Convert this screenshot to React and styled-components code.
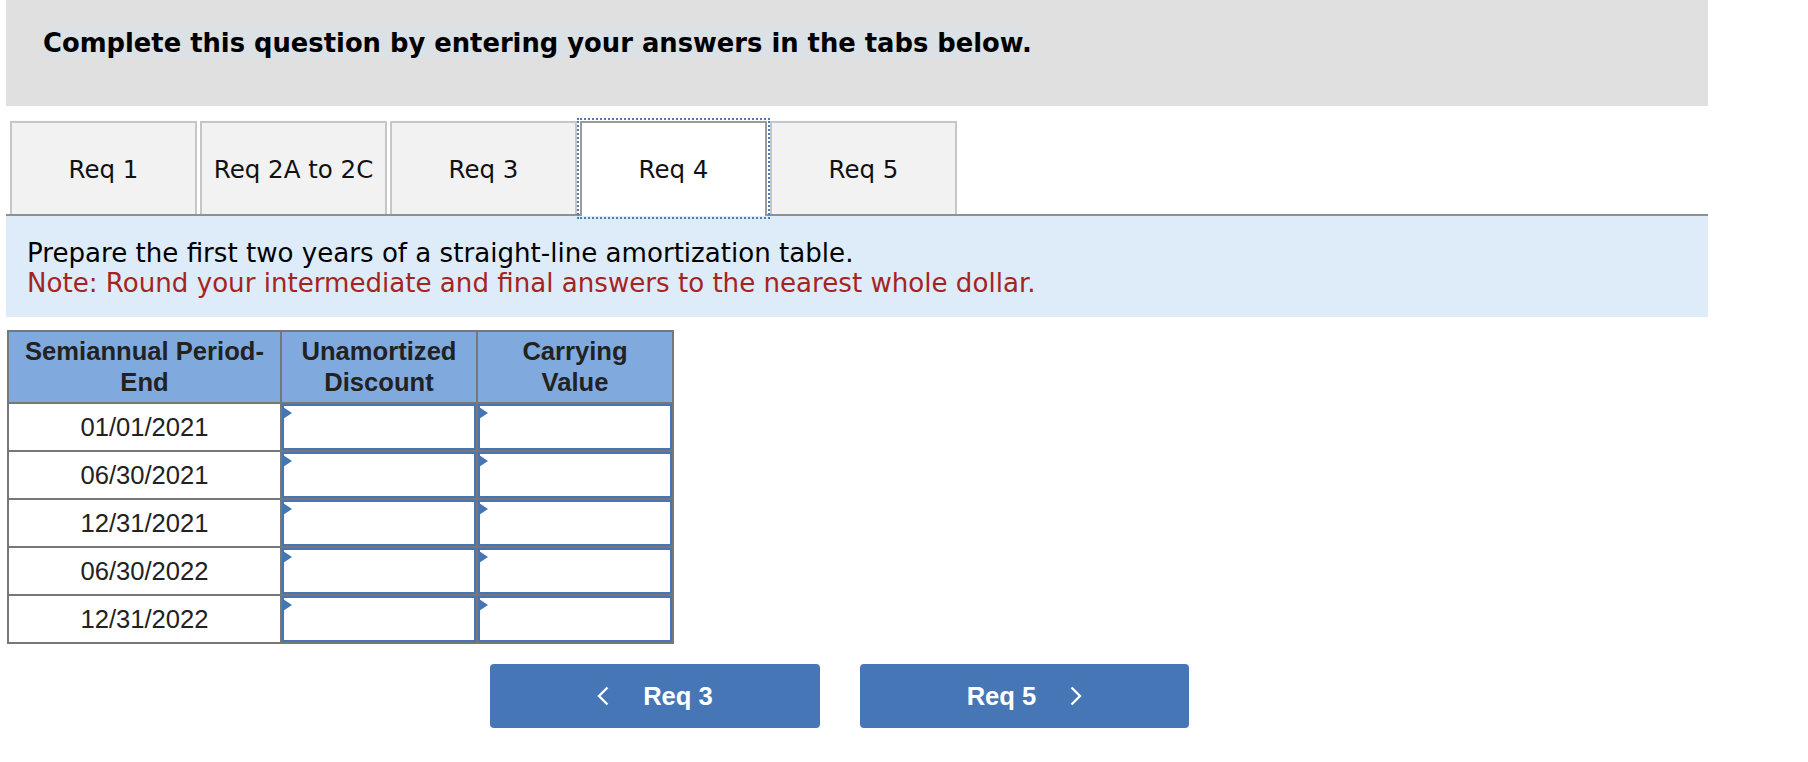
import React from 'react';
import styled, { createGlobalStyle, css } from 'styled-components';

const GlobalStyle = createGlobalStyle`
  html, body {
    margin: 0;
    padding: 0;
    background: #ffffff;
  }
  body {
    font-family: "DejaVu Sans", Verdana, sans-serif;
    color: #000;
  }
  * {
    box-sizing: border-box;
  }
`;

const Page = styled.div`
  width: 1808px;
  padding-left: 6px;
`;

const Column = styled.div`
  width: 1702px;
  display: flex;
  flex-direction: column;
  align-items: stretch;
`;

const Banner = styled.div`
  height: 106px;
  background: #e0e0e0;
  padding: 28px 0 0 37px;
  font-family: "DejaVu Sans", Verdana, sans-serif;
  font-weight: 700;
  font-size: 25.8px;
  line-height: normal;
  color: #000;
`;

const BannerText = styled.span`
  background: #dce1e5;
`;

const TabStrip = styled.div`
  margin-top: 15px;
  display: flex;
  align-items: flex-start;
  gap: 3px;
  padding-left: 4px;
  border-bottom: 2px solid #909090;
`;

const Tab = styled.div`
  width: 187px;
  height: 93px;
  padding-top: 2px;
  display: flex;
  align-items: center;
  justify-content: center;
  font-family: "DejaVu Sans", Verdana, sans-serif;
  font-size: 24.5px;
  color: #111;
  background: #f2f2f2;
  border: 2px solid #c6c6c6;
  border-bottom: none;
  cursor: pointer;
  ${(p) =>
    p.$active &&
    css`
      height: 95px;
      margin-bottom: -2px;
      padding-bottom: 2px;
      background: #ffffff;
      border-color: #9a9a9a;
      outline: 2px dotted #4a7bbf;
      outline-offset: 1px;
      position: relative;
      z-index: 1;
    `}
`;

const Instructions = styled.div`
  height: 101px;
  background: #ddecf8;
  padding: 22px 21px 0;
  font-family: "DejaVu Sans", Verdana, sans-serif;
  font-size: 26.1px;
  line-height: 30px;
  color: #000;
`;

const Note = styled.div`
  color: #a52422;
`;

const Table = styled.div`
  margin: 13px 0 0 1px;
  align-self: flex-start;
  display: grid;
  grid-template-columns: 271px 194px 194px;
  grid-template-rows: 70px repeat(5, 46px);
  gap: 2px;
  padding: 2px;
  background: #777777;
`;

const HeadCell = styled.div`
  background: #80aade;
  display: flex;
  align-items: center;
  justify-content: center;
  text-align: center;
  font-family: "Liberation Sans", Arial, sans-serif;
  font-weight: 700;
  font-size: 25.6px;
  line-height: 31px;
  color: #222;
`;

const DateCell = styled.div`
  background: #ffffff;
  display: flex;
  align-items: center;
  justify-content: center;
  font-family: "Liberation Sans", Arial, sans-serif;
  font-size: 25.6px;
  color: #222;
`;

const InputCell = styled.div`
  position: relative;
  background: #ffffff;
`;

const AmountInput = styled.input`
  display: block;
  width: 100%;
  height: 100%;
  margin: 0;
  padding: 0 8px;
  border: 2px solid #4674b5;
  background: #ffffff;
  font-family: "Liberation Sans", Arial, sans-serif;
  font-size: 25.6px;
  text-align: right;
  outline: none;
`;

const Marker = styled.span`
  position: absolute;
  left: 1px;
  top: 3px;
  width: 0;
  height: 0;
  border-top: 6px solid transparent;
  border-bottom: 6px solid transparent;
  border-left: 9px solid #4674b5;
  pointer-events: none;
`;

const Nav = styled.div`
  display: flex;
  gap: 40px;
  margin-top: 20px;
  padding-left: 484px;
`;

const NavButton = styled.button`
  width: ${(p) => p.$w}px;
  height: 64px;
  margin: 0;
  padding: 0;
  border: none;
  border-radius: 4px;
  background: #4676b5;
  color: #ffffff;
  display: flex;
  align-items: center;
  justify-content: center;
  gap: 34px;
  font-family: "Liberation Sans", Arial, sans-serif;
  font-weight: 700;
  font-size: 25.6px;
  cursor: pointer;
`;

const Chevron = ({ dir }) => (
  <svg width="12" height="20" viewBox="0 0 12 20" aria-hidden="true">
    <polyline
      points={dir === 'left' ? '10.5,1.5 2,10 10.5,18.5' : '1.5,1.5 10,10 1.5,18.5'}
      fill="none"
      stroke="#ffffff"
      strokeWidth="2.3"
    />
  </svg>
);

const tabs = ['Req 1', 'Req 2A to 2C', 'Req 3', 'Req 4', 'Req 5'];
const dates = ['01/01/2021', '06/30/2021', '12/31/2021', '06/30/2022', '12/31/2022'];

export default function App() {
  return (
    <>
      <GlobalStyle />
      <Page>
        <Column>
          <Banner>
            <BannerText>Complete this question by entering your answers in the tabs below.</BannerText>
          </Banner>

          <TabStrip>
            {tabs.map((t) => (
              <Tab key={t} $active={t === 'Req 4'}>
                {t}
              </Tab>
            ))}
          </TabStrip>

          <Instructions>
            <div>Prepare the first two years of a straight-line amortization table.</div>
            <Note>Note: Round your intermediate and final answers to the nearest whole dollar.</Note>
          </Instructions>

          <Table>
            <HeadCell>
              Semiannual Period-
              <br />
              End
            </HeadCell>
            <HeadCell>
              Unamortized
              <br />
              Discount
            </HeadCell>
            <HeadCell>
              Carrying
              <br />
              Value
            </HeadCell>
            {dates.map((d) => (
              <React.Fragment key={d}>
                <DateCell>{d}</DateCell>
                <InputCell>
                  <AmountInput type="text" aria-label={`Unamortized discount ${d}`} />
                  <Marker />
                </InputCell>
                <InputCell>
                  <AmountInput type="text" aria-label={`Carrying value ${d}`} />
                  <Marker />
                </InputCell>
              </React.Fragment>
            ))}
          </Table>

          <Nav>
            <NavButton $w={330}>
              <Chevron dir="left" />
              <span>Req 3</span>
            </NavButton>
            <NavButton $w={329}>
              <span>Req 5</span>
              <Chevron dir="right" />
            </NavButton>
          </Nav>
        </Column>
      </Page>
    </>
  );
}
